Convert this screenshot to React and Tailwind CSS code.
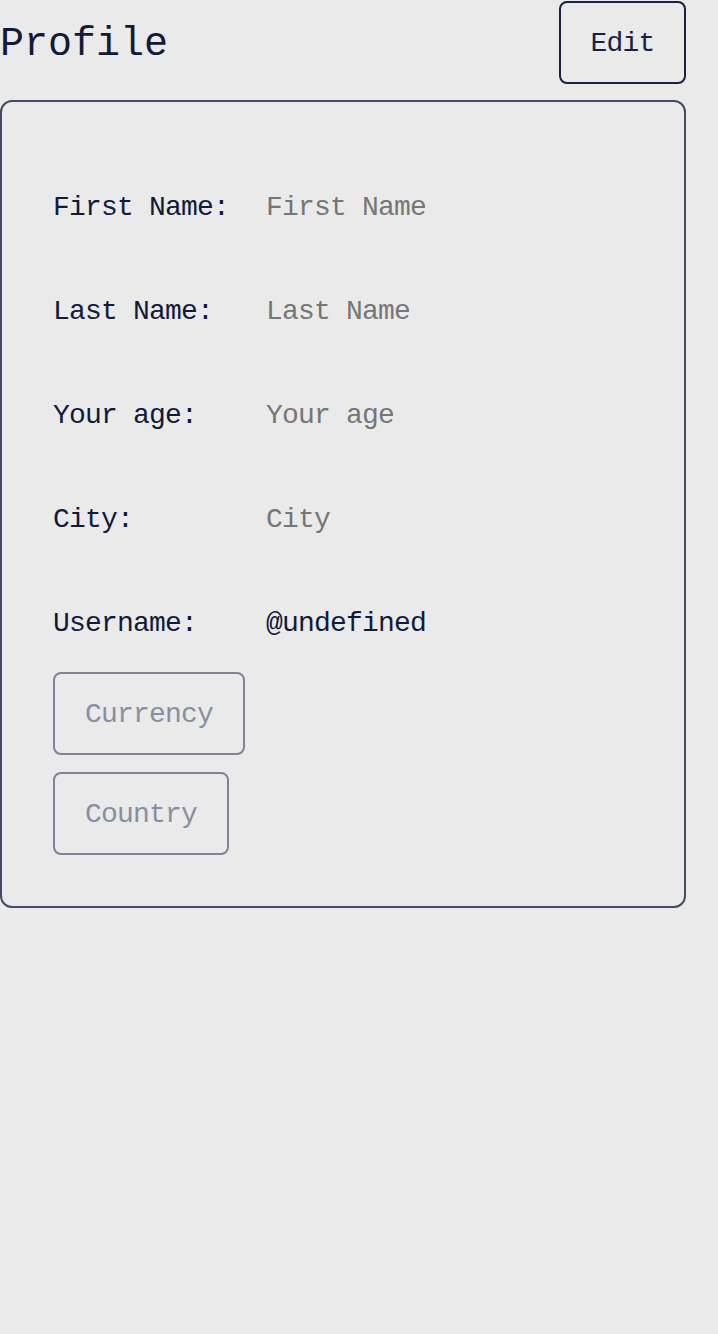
export default function App() {
  const rows = [
    { label: 'First Name:', value: 'First Name', muted: true },
    { label: 'Last Name:', value: 'Last Name', muted: true },
    { label: 'Your age:', value: 'Your age', muted: true },
    { label: 'City:', value: 'City', muted: true },
    { label: 'Username:', value: '@undefined', muted: false },
  ];

  return (
    <div className="min-h-[1334px] w-[718px] bg-[#eaeaea] text-[#121a3a] font-['Liberation_Mono',monospace]">
      <div className="w-[686px]">
        <div className="flex items-center justify-between h-[84px] pt-px">
          <h1 className="text-[40px] leading-none pt-[4px]">Profile</h1>
          <button className="h-[83px] w-[127px] border-2 border-[#1b2145] rounded-lg text-[28px] tracking-[-0.8px] text-[#1b2145] pt-[2px]">
            Edit
          </button>
        </div>

        <div className="mt-[16px] border-2 border-[#444b64] rounded-xl pl-[51px] pr-[50px] pt-[54px] pb-[51px]">
          {rows.map((row) => (
            <div key={row.label} className="flex items-center h-[104px] text-[28px] tracking-[-0.8px]">
              <span className="w-[213px]">{row.label}</span>
              <span className={row.muted ? 'text-[#767676]' : ''}>{row.value}</span>
            </div>
          ))}
          <div className="flex flex-col items-start gap-[17px] -mt-[4px]">
            {['Currency', 'Country'].map((b) => (
              <button
                key={b}
                className="h-[83px] px-[30px] pt-[2px] border-2 border-[#7e8399] rounded-lg text-[28px] tracking-[-0.8px] text-[#888ea3]"
              >
                {b}
              </button>
            ))}
          </div>
        </div>
      </div>
    </div>
  );
}
